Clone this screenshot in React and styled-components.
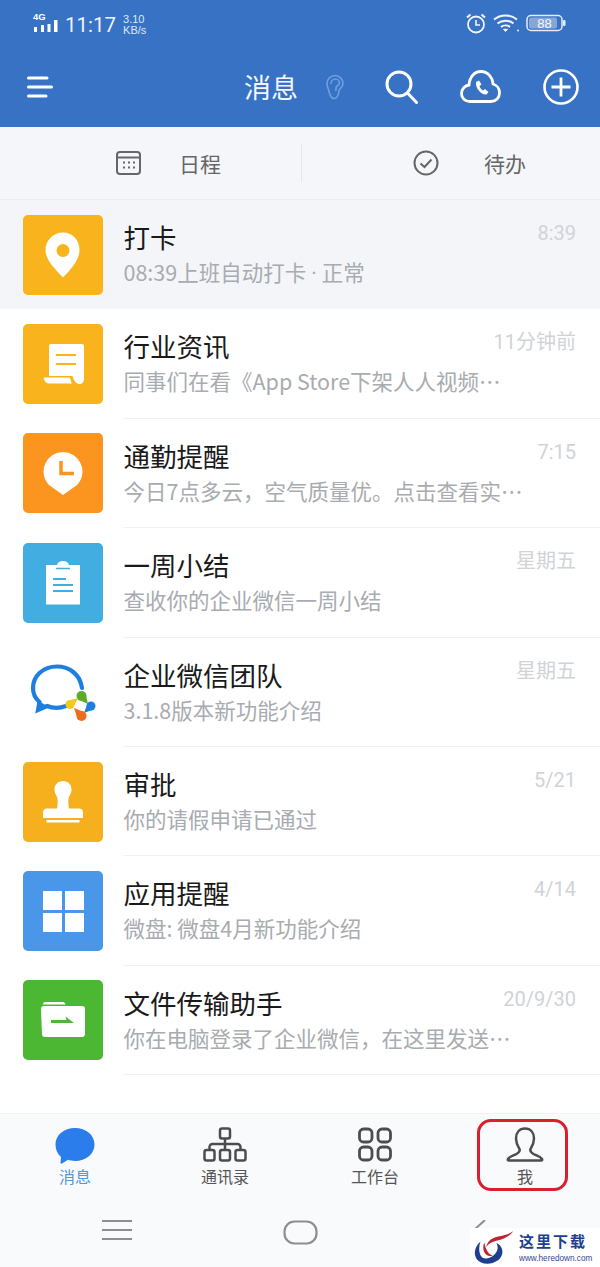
import styled, { createGlobalStyle } from "styled-components";

const GlobalStyle = createGlobalStyle`
    html, body {
        margin: 0;
        padding: 0;
        background: #fff;
    }
    * {
        box-sizing: border-box;
    }
`;

const FONT = `"Noto Sans CJK SC", "Noto Sans", sans-serif`;
const LATIN = `Roboto, "Noto Sans CJK SC", sans-serif`;

const Page = styled.div`
    position: relative;
    width: 600px;
    height: 1267px;
    display: flex;
    flex-direction: column;
    overflow: hidden;
    background: #fff;
    font-family: ${FONT};
`;

const Header = styled.header`
    height: 127px;
    background: #3872c5;
    color: #fff;
    display: flex;
    flex-direction: column;
`;

const StatusBar = styled.div`
    height: 50px;
    padding: 12px 34px 0 33px;
    display: flex;
    align-items: flex-start;
`;

const Clock = styled.span`
    font-family: ${LATIN};
    font-size: 20.5px;
    line-height: 26px;
    margin-left: 6px;
    color: #eef3fb;
`;

const Speed = styled.span`
    font-family: "Liberation Sans", sans-serif;
    font-size: 11px;
    line-height: 11px;
    margin: 2px 0 0 7px;
    color: #dde8f7;
    text-align: left;
`;

const StatusRight = styled.div`
    margin-left: auto;
    margin-top: -1px;
    display: flex;
    align-items: center;
    gap: 6px;
    height: 24px;
`;

const NavBar = styled.div`
    flex: 1;
    display: flex;
    align-items: center;
    padding: 0 0 4px 27px;
`;

const NavTitle = styled.h1`
    flex: none;
    margin: 0 0 0 191px;
    font-size: 27px;
    font-weight: 400;
    line-height: 34px;
    white-space: nowrap;
    color: #f4f7fc;
`;

const NavIcon = styled.svg`
    margin-left: ${(p) => p.$gap}px;
    flex: none;
    display: block;
`;

const TopTabs = styled.div`
    height: 73px;
    background: #f4f6f9;
    border-bottom: 1px solid #ecedf0;
    display: flex;
    align-items: center;
`;

const TopTab = styled.div`
    flex: ${(p) => (p.$last ? 1 : "none")};
    width: ${(p) => (p.$last ? "auto" : "301px")};
    padding-left: ${(p) => p.$pad}px;
    display: flex;
    align-items: center;
    gap: ${(p) => p.$gap}px;
    color: #666;
    font-size: 21px;
    line-height: 30px;
`;

const TabDivider = styled.div`
    width: 1px;
    height: 38px;
    background: #e4e6ea;
`;

const List = styled.div`
    flex: 1;
    display: flex;
    flex-direction: column;
`;

const Row = styled.div`
    height: 109.4px;
    flex: none;
    padding-left: 23px;
    display: flex;
    align-items: flex-start;
    background: ${(p) => (p.$pinned ? "#f4f5f8" : "#fff")};
`;

const IconTile = styled.div`
    width: 80px;
    height: 80px;
    margin-top: 14.7px;
    flex: none;
    border-radius: 5px;
    background: ${(p) => p.$color};
    display: flex;
    align-items: center;
    justify-content: center;
`;

const RowBody = styled.div`
    flex: 1;
    min-width: 0;
    height: 100%;
    margin-left: 20.5px;
    padding: 17px 24px 0 0;
    border-bottom: 1px solid ${(p) => (p.$pinned ? "transparent" : "#f0f1f3")};
    display: grid;
    grid-template-columns: 1fr auto;
    grid-template-rows: 39px 32px;
    align-content: start;
`;

const RowTitle = styled.div`
    font-size: 26.5px;
    line-height: 40px;
    color: #1a1a1a;
`;

const RowTime = styled.div`
    font-family: ${LATIN};
    font-size: 20px;
    line-height: 33px;
    color: #d0d3d8;
`;

const RowText = styled.div`
    grid-column: 1 / 3;
    font-size: 21.5px;
    line-height: 32px;
    color: #a8abaf;
    white-space: nowrap;
`;

const Dot = styled.span`
    font-family: Roboto, sans-serif;
    padding: 0 5px;
`;

const BottomBar = styled.div`
    height: 154px;
    flex: none;
    background: #f9fafc;
    border-top: 1px solid #f1f2f4;
    display: flex;
    flex-direction: column;
`;

const BottomTabs = styled.nav`
    display: grid;
    grid-template-columns: repeat(4, 150px);
`;

const BottomTab = styled.div`
    position: relative;
    height: 78px;
    padding-top: 13px;
    display: flex;
    flex-direction: column;
    align-items: center;
    color: ${(p) => (p.$active ? "#4f97dc" : "#555")};
    font-size: 16px;
`;

const TabIcon = styled.svg`
    display: block;
    height: 38px;
    flex: none;
`;

const TabLabel = styled.span`
    line-height: 22px;
`;

const Highlight = styled.div`
    position: absolute;
    left: 27px;
    top: 5px;
    width: 91px;
    height: 72px;
    border: 3px solid #d91f30;
    border-radius: 14px;
`;

const SystemNav = styled.div`
    flex: 1;
    position: relative;
    display: flex;
    align-items: flex-start;
    padding-top: 28px;
`;

const SysIcon = styled.svg`
    display: block;
    flex: none;
    margin-left: ${(p) => p.$gap}px;
`;

const Watermark = styled.div`
    position: absolute;
    right: 0;
    bottom: 0;
    width: 130px;
    height: 39px;
    background: #fff;
    display: flex;
    align-items: flex-start;
    padding: 2px 0 0 4px;
`;

const MarkLogo = styled.svg`
    flex: none;
    display: block;
`;

const MarkText = styled.div`
    margin-left: 4px;
    display: flex;
    flex-direction: column;
`;

const MarkTitle = styled.span`
    font-family: "Noto Sans CJK SC", sans-serif;
    font-weight: 700;
    font-size: 15px;
    line-height: 21px;
    letter-spacing: 2px;
    color: #1d3f8f;
    white-space: nowrap;
`;

const MarkUrl = styled.span`
    font-family: "Liberation Sans", sans-serif;
    font-size: 8.2px;
    line-height: 15px;
    color: #33478a;
    white-space: nowrap;
`;

// ---- icons ----

const SignalIcon = () => (
    <svg width="26" height="22" viewBox="0 0 26 22">
        <text x="0" y="8" fontFamily="Liberation Sans" fontWeight="700" fontSize="9.5" fill="#fff">4G</text>
        <g fill="#fff">
            <rect x="1" y="15" width="3" height="5" />
            <rect x="8" y="13" width="3" height="7" />
            <rect x="14.5" y="12" width="3" height="8" />
            <rect x="21" y="8" width="3.5" height="12" />
        </g>
    </svg>
);

const AlarmIcon = () => (
    <svg width="22" height="22" viewBox="0 0 22 22" fill="none" stroke="#f2f5fb">
        <circle cx="11" cy="12.5" r="8" strokeWidth="1.8" />
        <path d="M11 8v5h4" strokeWidth="1.6" />
        <path d="M2 5.5 5.5 2.5M20 5.5 16.5 2.5" strokeWidth="2.2" />
    </svg>
);

const WifiIcon = () => (
    <svg width="27" height="20" viewBox="0 0 27 20" fill="none" stroke="#f2f5fb" strokeWidth="2">
        <path d="M1 6.5C7.5 1 17.5 1 24 6.5" />
        <path d="M4.5 10.5c4.6-3.8 11.4-3.8 16 0" />
        <path d="M8 14c2.6-2 6.4-2 9 0" />
        <path d="M10.5 16.3 12.5 18.5 14.5 16.3Z" fill="#f2f5fb" strokeWidth="1" />
        <circle cx="25" cy="17.5" r="1" fill="#f2f5fb" stroke="none" />
    </svg>
);

const BatteryIcon = () => (
    <svg width="40" height="18" viewBox="0 0 40 18">
        <rect x="1" y="1.5" width="35" height="15" rx="4" fill="none" stroke="#e6edf8" strokeWidth="1.5" />
        <rect x="3" y="3.5" width="28" height="11" rx="2" fill="#8aa5d2" />
        <rect x="37" y="6" width="2.5" height="6" rx="1" fill="#e6edf8" />
        <text x="18.5" y="14" textAnchor="middle" fontFamily="Liberation Sans" fontSize="13" fill="#f4f7fc">88</text>
    </svg>
);

const PinIcon = () => (
    <svg width="36" height="46" viewBox="0 0 36 46">
        <path fillRule="evenodd" fill="#fff" d="M18 0.5C8 0.5 0.5 8.5 0.5 18 0.5 28 10 37 18 45.5 26 37 34.5 28 34.5 18 34.5 8.5 28 0.5 18 0.5ZM18 12a6.5 6.5 0 1 1 0 13 6.5 6.5 0 0 1 0-13Z" />
    </svg>
);

const NewsIcon = () => (
    <svg width="41" height="40" viewBox="0 0 41 40">
        <path fill="#fff" d="M6 2a2 2 0 0 1 2-2h31a2 2 0 0 1 2 2v33c0 3-2 5-4.5 5S31 38 29.5 32H6Z" />
        <path fill="#fff" stroke="#f8b31d" strokeWidth="1" d="M0 33h27.5c.2 2.5 1 4.5 2 7H6C3 40 .5 37 0 33Z" />
        <path stroke="#f8b31d" strokeWidth="2.2" d="M13 11h20M13 20h20" />
    </svg>
);

const ClockPinIcon = () => (
    <svg width="40" height="45" viewBox="0 0 40 45">
        <path fill="#fff" d="M20 1a19.5 19.5 0 0 1 14 33L20 44 6 34A19.5 19.5 0 0 1 20 1Z" />
        <path fill="none" stroke="#fb9520" strokeWidth="3.5" d="M18 10v12.5h13" />
    </svg>
);

const ClipboardIcon = () => (
    <svg width="34" height="44" viewBox="0 0 34 44">
        <path fill="#fff" d="M0 4h11c.5-2.5 3-4 6-4s5.5 1.5 6 4h11v39.5H0Z" />
        <path stroke="#41ade0" strokeWidth="2" d="M7 18h13M7 24h20M7 30h20" />
        <path stroke="#41ade0" strokeWidth="1.5" d="M10 7.5h14" />
    </svg>
);

// a coloured node of the logo: round head tapering to a point
const Drop = ({ hx, hy, tx, ty, r, color }) => {
    const dx = tx - hx;
    const dy = ty - hy;
    const len = Math.hypot(dx, dy);
    const nx = (-dy / len) * r;
    const ny = (dx / len) * r;
    return (
        <g fill={color}>
            <circle cx={hx} cy={hy} r={r} />
            <polygon points={`${hx + nx},${hy + ny} ${hx - nx},${hy - ny} ${tx},${ty}`} />
        </g>
    );
};

const WeComLogo = () => (
    <svg width="66" height="58" viewBox="0 0 66 58" fill="none">
        <path stroke="#1c7fe0" strokeWidth="4.2" strokeLinecap="round" d="M52 25C50 11 39 3.5 27 3.5 13 3.5 3 13 3 25c0 6 3 11 6.5 14L8 47l9-4c7 3 14 2 19 0" />
        <path fill="#1c7fe0" d="M7 38l5 2 5 3-9 5.5Z" />
        <Drop hx={51.5} hy={33} tx={58} ty={41} r={5} color="#5cab2a" />
        <Drop hx={61} hy={43} tx={54} ty={50} r={4.5} color="#1c7fe0" />
        <Drop hx={51.5} hy={53} tx={44} ty={45} r={5} color="#ee6c1c" />
        <Drop hx={40} hy={41.5} tx={48} ty={35} r={4.5} color="#f4c91e" />
    </svg>
);

const StampIcon = () => (
    <svg width="40" height="42" viewBox="0 0 40 42">
        <path fill="#fff" d="M20 0c5 0 8.5 3.5 8.5 8.5 0 4-2.5 6-3 9-.4 3-.2 7 .5 10h10a4 4 0 0 1 4 4V37H0v-5.5a4 4 0 0 1 4-4h10c.7-3 .9-7 .5-10-.5-3-3-5-3-9C11.5 3.5 15 0 20 0Z" />
        <rect x="3.5" y="39" width="33" height="2.5" fill="#fff" />
    </svg>
);

const GridTileIcon = () => (
    <svg width="41" height="41" viewBox="0 0 41 41" fill="#fff">
        <rect width="19" height="19" />
        <rect x="22" width="19" height="19" />
        <rect y="22" width="19" height="19" />
        <rect x="22" y="22" width="19" height="19" />
    </svg>
);

const FolderIcon = () => (
    <svg width="44" height="36" viewBox="0 0 44 36">
        <path fill="#fff" d="M2 2.5C2 1 3 0 4 0h18c1 0 2 1 2.5 2.5Z" />
        <path fill="#fff" d="M0 7a3 3 0 0 1 3-3h38a3 3 0 0 1 3 3v25a3 3 0 0 1-3 3H4a3 3 0 0 1-3-3Z" />
        <path fill="#4cb732" d="M10 18h15.5l-1-3.5L33 21H10Z" />
    </svg>
);

const messages = [
    { title: "打卡", text: <>08:39上班自动打卡<Dot>·</Dot>正常</>, time: "8:39", color: "#f8b31d", icon: <PinIcon />, pinned: true },
    { title: "行业资讯", text: "同事们在看《App Store下架人人视频…", time: "11分钟前", color: "#f8b31d", icon: <NewsIcon /> },
    { title: "通勤提醒", text: "今日7点多云，空气质量优。点击查看实…", time: "7:15", color: "#fb9520", icon: <ClockPinIcon /> },
    { title: "一周小结", text: "查收你的企业微信一周小结", time: "星期五", color: "#41ade0", icon: <ClipboardIcon /> },
    { title: "企业微信团队", text: "3.1.8版本新功能介绍", time: "星期五", color: "#fff", icon: <WeComLogo /> },
    { title: "审批", text: "你的请假申请已通过", time: "5/21", color: "#f6b01e", icon: <StampIcon /> },
    { title: "应用提醒", text: "微盘: 微盘4月新功能介绍", time: "4/14", color: "#4a97ea", icon: <GridTileIcon /> },
    { title: "文件传输助手", text: "你在电脑登录了企业微信，在这里发送…", time: "20/9/30", color: "#4cb732", icon: <FolderIcon /> },
];

const App = () => {
    return (
        <Page>
            <GlobalStyle />
            <Header>
                <StatusBar>
                    <SignalIcon />
                    <Clock>11:17</Clock>
                    <Speed>3.10<br />KB/s</Speed>
                    <StatusRight>
                        <AlarmIcon />
                        <WifiIcon />
                        <BatteryIcon />
                    </StatusRight>
                </StatusBar>
                <NavBar>
                    <svg width="26" height="22" viewBox="0 0 26 22" stroke="#fff" strokeWidth="3" strokeLinecap="round">
                        <path d="M1.5 2H20M1.5 11H24.5M1.5 20H19" />
                    </svg>
                    <NavTitle>消息</NavTitle>
                    <NavIcon $gap={28} width="18" height="26" viewBox="0 0 18 26" fill="none" stroke="#6fa0e0" strokeWidth="1.6">
                        <path d="M3.5 19C2.5 15.5 1 12.5 1 9.5A8 8 0 0 1 17 9.5c0 3.5-3.5 4.5-4 7.5-.5 3.5-2 7.5-5 7.5-2 0-3.5-1.500-4.5-5.500Z" />
                        <path d="M5 10c0-3 2-5 4.5-5s4 2 4 4c0 2.5-3.5 2.5-3.5 5 0 1 .3 2-.5 3" />
                    </NavIcon>
                    <NavIcon $gap={41} width="33" height="34" viewBox="0 0 33 34" fill="none" stroke="#fff" strokeWidth="3">
                        <circle cx="14" cy="14" r="12" />
                        <path d="M22.5 23 31.5 32.5" strokeLinecap="round" />
                    </NavIcon>
                    <NavIcon $gap={42} width="41" height="33" viewBox="0 0 41 33" fill="none" stroke="#fff">
                        <path strokeWidth="2.8" d="M10 31.5C5 31.5 1.5 28 1.5 23.5S5 15.5 9 15c.5-8 5.5-13.5 12-13.5S32.5 7 33 14c4 1 6.5 5 6.5 9 0 4.5-3.5 8.5-8.5 8.5Z" />
                        <path fill="#fff" stroke="none" d="M16 12l3-1.5 2.5 4-2 1.5c.5 2 2 3.5 3.5 4.5l2-1.5 3.5 3-2 2.5c-5 .5-11.5-6-10.5-12.5Z" />
                    </NavIcon>
                    <NavIcon $gap={42} width="36" height="36" viewBox="0 0 36 36" fill="none" stroke="#fff">
                        <circle cx="18" cy="18" r="16.5" strokeWidth="2.6" />
                        <path d="M18 8.5v19M8.5 18h19" strokeWidth="2.8" />
                    </NavIcon>
                </NavBar>
            </Header>

            <TopTabs>
                <TopTab $pad={116} $gap={38}>
                    <svg width="25" height="24" viewBox="0 0 25 24" fill="none" stroke="#666">
                        <rect x="1" y="1" width="23" height="22" rx="3" strokeWidth="2" />
                        <path d="M1 6.5h23" strokeWidth="2" />
                        <path d="M7 11.5h2M12 11.5h2M17 11.5h2M7 16.5h2M12 16.5h2M17 16.5h2" strokeWidth="2" />
                    </svg>
                    日程
                </TopTab>
                <TabDivider />
                <TopTab $last $pad={111} $gap={45}>
                    <svg width="26" height="26" viewBox="0 0 26 26" fill="none" stroke="#666" strokeWidth="2">
                        <circle cx="13" cy="13" r="11.5" />
                        <path d="M7.5 13.5 11.5 17 18.5 9.5" />
                    </svg>
                    待办
                </TopTab>
            </TopTabs>

            <List>
                {messages.map((m) => (
                    <Row key={m.title} $pinned={m.pinned}>
                        <IconTile $color={m.color}>{m.icon}</IconTile>
                        <RowBody $pinned={m.pinned}>
                            <RowTitle>{m.title}</RowTitle>
                            <RowTime>{m.time}</RowTime>
                            <RowText>{m.text}</RowText>
                        </RowBody>
                    </Row>
                ))}
            </List>

            <BottomBar>
                <BottomTabs>
                    <BottomTab $active>
                        <TabIcon width="40" viewBox="0 0 40 38">
                            <path fill="#2a7dea" d="M20 1c11 0 19.5 7 19.5 16.5S31 34 20 34c-2.5 0-5-.5-7-1.2L7 36.5c-1 .5-1.5-.2-1.5-1l.5-5.5C2.5 27 .5 22.5.5 17.5.5 8 9 1 20 1Z" />
                        </TabIcon>
                        <TabLabel>消息</TabLabel>
                    </BottomTab>
                    <BottomTab>
                        <TabIcon width="44" viewBox="0 0 44 38" fill="none" stroke="#4d4d4f" strokeWidth="2.5">
                            <rect x="17" y="1.5" width="10" height="10" rx="2" />
                            <rect x="1.5" y="23" width="10" height="10.5" rx="2" />
                            <rect x="17" y="23" width="10" height="10.5" rx="2" />
                            <rect x="32.5" y="23" width="10" height="10.5" rx="2" />
                            <path d="M22 11.5V23M6.5 23v-3a3 3 0 0 1 3-3h25a3 3 0 0 1 3 3v3" />
                        </TabIcon>
                        <TabLabel>通讯录</TabLabel>
                    </BottomTab>
                    <BottomTab>
                        <TabIcon width="34" viewBox="0 0 34 38" fill="none" stroke="#4d4d4f" strokeWidth="2.8">
                            <rect x="1.5" y="2" width="12.5" height="13" rx="4" />
                            <rect x="20" y="2" width="12.5" height="13" rx="4" />
                            <rect x="1.5" y="20" width="12.5" height="13" rx="4" />
                            <rect x="20" y="20" width="12.5" height="13" rx="4" />
                        </TabIcon>
                        <TabLabel>工作台</TabLabel>
                    </BottomTab>
                    <BottomTab>
                        <Highlight />
                        <TabIcon width="38" viewBox="0 0 38 38" fill="none" stroke="#4d4d4f" strokeWidth="2.5">
                            <path d="M19 1.5c5.5 0 9 4 9 10 0 5-2 8-3.5 10.5-.8 2 .5 3.5 3 5 3 1.700 7 2.500 8.500 5 .5 1 .2 1.500-1 1.500H3c-1.200 0-1.500-.5-1-1.500 1.500-2.500 5.500-3.300 8.500-5 2.500-1.500 3.800-3 3-5C12 19.500 10 16.500 10 11.500c0-6 3.500-10 9-10Z" />
                        </TabIcon>
                        <TabLabel>我</TabLabel>
                    </BottomTab>
                </BottomTabs>
                <SystemNav>
                    <SysIcon $gap={102} width="30" height="20" viewBox="0 0 30 20" stroke="#8e8e8e" strokeWidth="2">
                        <path d="M0 1h30M0 10h30M0 19h30" />
                    </SysIcon>
                    <SysIcon $gap={151} width="35" height="25" viewBox="0 0 35 25" fill="none" stroke="#8e8e8e" strokeWidth="2.2">
                        <rect x="1.5" y="1.5" width="32" height="22" rx="10" />
                    </SysIcon>
                    <SysIcon $gap={152} width="16" height="12" viewBox="0 0 16 12" stroke="#8e8e8e" strokeWidth="2">
                        <path d="M15 0 4 10" />
                    </SysIcon>
                    <Watermark>
                        <MarkLogo width="41" height="36" viewBox="0 0 44 36">
                            <path fill="#c02431" d="M42 0C34 6 24 4 18 9c-3 2.5-4 5-5 8 3-4 7-6 12-7 6-1.500 13-4 17-10Z" />
                            <path fill="#1d3f8f" d="M7 11C1 16-1 24 3 30c3 4 10 6 17 4 8-2 12-9 10-15-1-3-3-5-6-6 2 3 2 7-1 11-3 4-8 6-12 5C6 28 4 19 7 11Z" />
                            <path fill="#c02431" d="M11 12c-2 5-1 10 2 13 3 2 5 2 7 1-4-1-7-5-9-14Z" />
                        </MarkLogo>
                        <MarkText>
                            <MarkTitle>这里下载</MarkTitle>
                            <MarkUrl>www.heredown.com</MarkUrl>
                        </MarkText>
                    </Watermark>
                </SystemNav>
            </BottomBar>
        </Page>
    );
};

export default App;
